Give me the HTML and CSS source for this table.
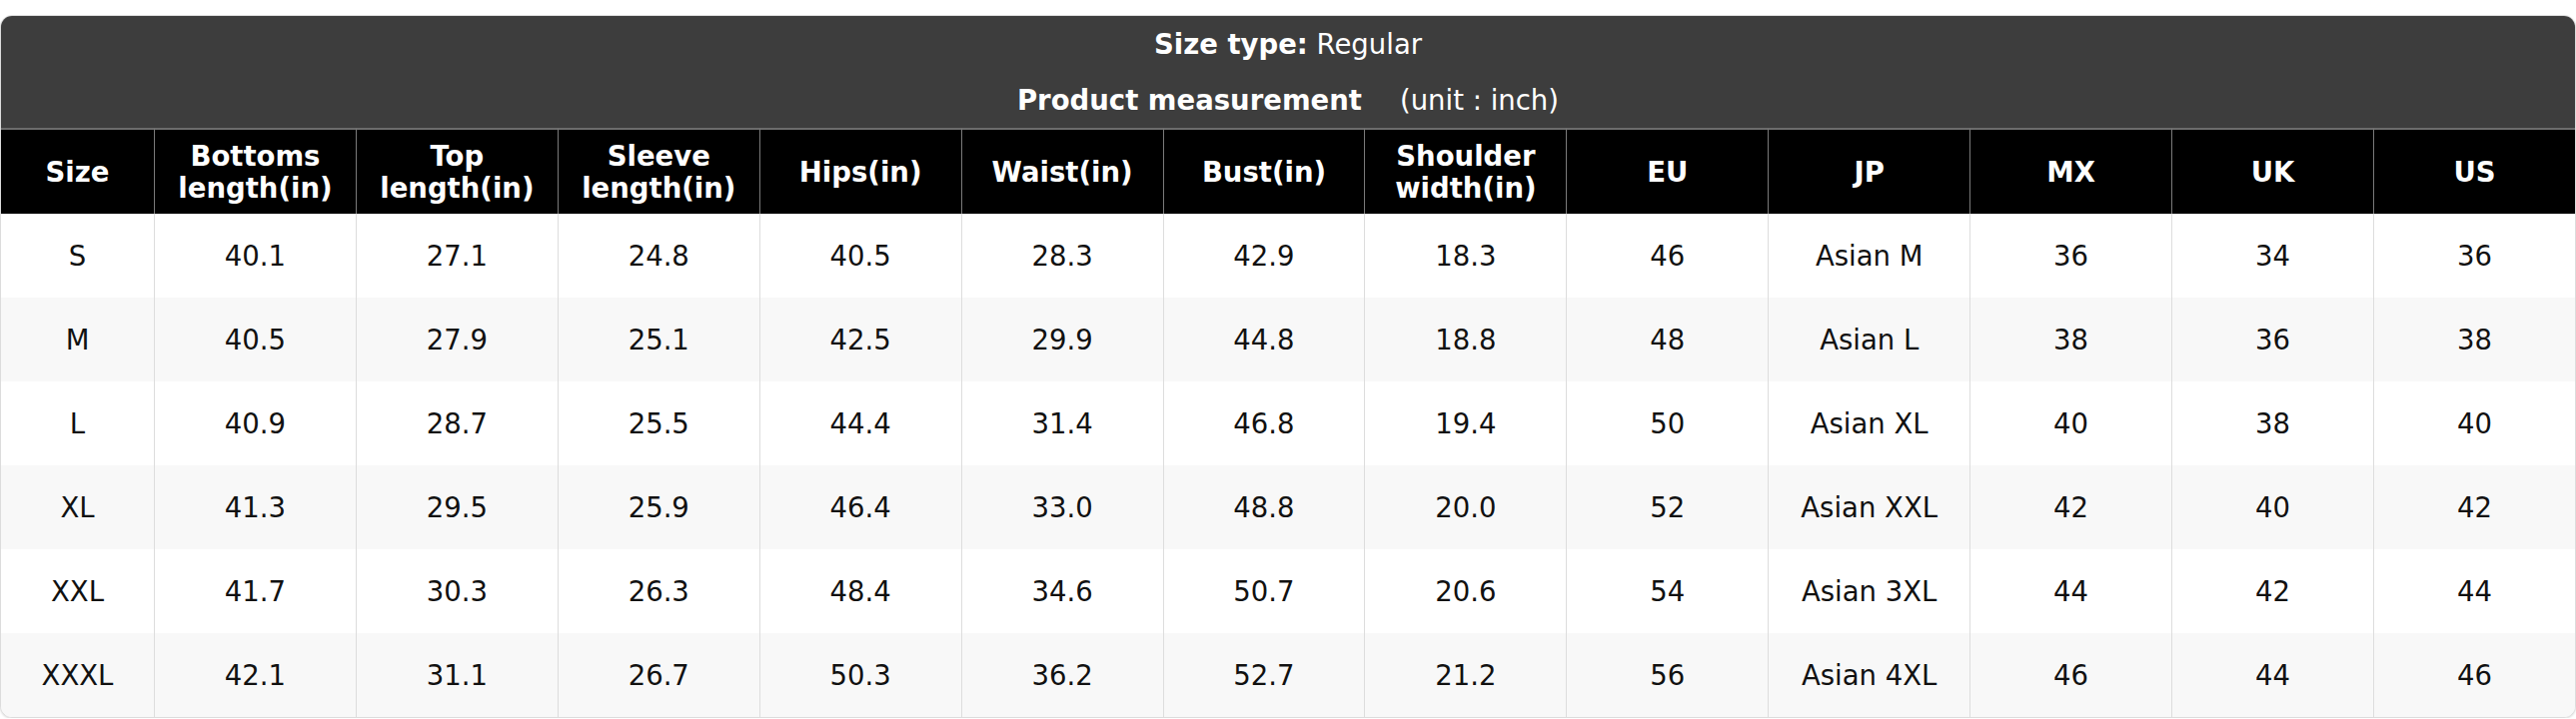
FILE: index.html
```html
<!DOCTYPE html>
<html lang="en">
<head>
<meta charset="utf-8">
<title>Size chart</title>
<link rel="stylesheet" href="styles.css">
</head>
<body>
<div class="chart">
  <div class="title">
    <div class="title-line"><b>Size type:</b> Regular</div>
    <div class="title-line"><b>Product measurement</b><span class="unit">(unit : inch)</span></div>
  </div>
  <table class="sizes">
    <colgroup>
      <col class="col-size">
      <col><col><col><col><col><col><col><col><col><col><col><col>
    </colgroup>
    <thead>
      <tr>
        <th>Size</th>
        <th>Bottoms<br>length(in)</th>
        <th>Top<br>length(in)</th>
        <th>Sleeve<br>length(in)</th>
        <th>Hips(in)</th>
        <th>Waist(in)</th>
        <th>Bust(in)</th>
        <th>Shoulder<br>width(in)</th>
        <th>EU</th>
        <th>JP</th>
        <th>MX</th>
        <th>UK</th>
        <th>US</th>
      </tr>
    </thead>
    <tbody>
      <tr><td>S</td><td>40.1</td><td>27.1</td><td>24.8</td><td>40.5</td><td>28.3</td><td>42.9</td><td>18.3</td><td>46</td><td>Asian M</td><td>36</td><td>34</td><td>36</td></tr>
      <tr><td>M</td><td>40.5</td><td>27.9</td><td>25.1</td><td>42.5</td><td>29.9</td><td>44.8</td><td>18.8</td><td>48</td><td>Asian L</td><td>38</td><td>36</td><td>38</td></tr>
      <tr><td>L</td><td>40.9</td><td>28.7</td><td>25.5</td><td>44.4</td><td>31.4</td><td>46.8</td><td>19.4</td><td>50</td><td>Asian XL</td><td>40</td><td>38</td><td>40</td></tr>
      <tr><td>XL</td><td>41.3</td><td>29.5</td><td>25.9</td><td>46.4</td><td>33.0</td><td>48.8</td><td>20.0</td><td>52</td><td>Asian XXL</td><td>42</td><td>40</td><td>42</td></tr>
      <tr><td>XXL</td><td>41.7</td><td>30.3</td><td>26.3</td><td>48.4</td><td>34.6</td><td>50.7</td><td>20.6</td><td>54</td><td>Asian 3XL</td><td>44</td><td>42</td><td>44</td></tr>
      <tr><td>XXXL</td><td>42.1</td><td>31.1</td><td>26.7</td><td>50.3</td><td>36.2</td><td>52.7</td><td>21.2</td><td>56</td><td>Asian 4XL</td><td>46</td><td>44</td><td>46</td></tr>
    </tbody>
  </table>
</div>
</body>
</html>
```
FILE: styles.css
```css
html, body {
  margin: 0;
  padding: 0;
  background: #ffffff;
}

body {
  padding-top: 15px;
  font-family: "DejaVu Sans", "Liberation Sans", sans-serif;
}

.chart {
  box-sizing: border-box;
  width: 2578px;
  border: 1px solid #dcdcdc;
  border-radius: 12px;
  overflow: hidden;
  box-shadow: 0 1px 2px rgba(0, 0, 0, 0.12);
  background: #ffffff;
}

.title {
  background: #3d3d3d;
  color: #ffffff;
  text-align: center;
  font-size: 27.5px;
}

.title-line {
  height: 56px;
  line-height: 56px;
}

.title-line b {
  font-weight: bold;
}

.unit {
  margin-left: 38px;
}

.sizes {
  width: 100%;
  table-layout: fixed;
  border-collapse: separate;
  border-spacing: 0;
  font-size: 27.5px;
}

.col-size {
  width: 153px;
}

.sizes th {
  background: #000000;
  color: #ffffff;
  font-weight: bold;
  height: 84px;
  line-height: 32px;
  padding: 0;
  border-top: 2px solid #6c6c6c;
  border-left: 1px solid #7a7a7a;
  text-align: center;
  vertical-align: middle;
}

.sizes td {
  height: 84px;
  padding: 0;
  text-align: center;
  vertical-align: middle;
  color: #111111;
  border-left: 1px solid #dddddd;
}

.sizes th:first-child,
.sizes td:first-child {
  border-left: none;
}

.sizes tbody tr:nth-child(even) td {
  background: #f8f8f8;
}
```
